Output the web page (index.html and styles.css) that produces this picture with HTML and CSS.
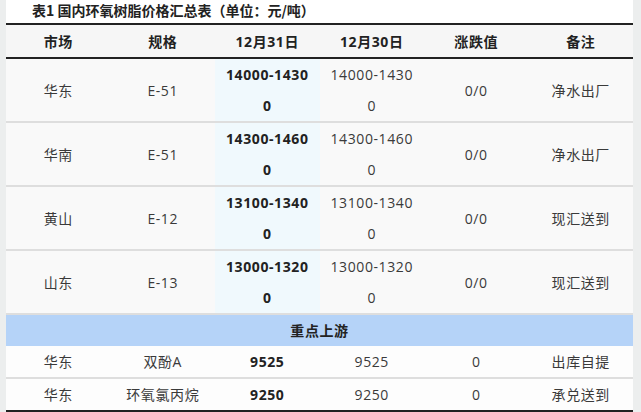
FILE: index.html
```html
<!DOCTYPE html>
<html lang="zh">
<head>
<meta charset="utf-8">
<link rel="stylesheet" href="styles.css">
</head>
<body>
<div class="sheet">
  <div class="title">表1 国内环氧树脂价格汇总表（单位：元/吨）</div>
  <table class="price">
    <colgroup>
      <col><col><col class="hl"><col><col><col>
    </colgroup>
    <thead>
      <tr><th>市场</th><th>规格</th><th>12月31日</th><th>12月30日</th><th>涨跌值</th><th>备注</th></tr>
    </thead>
    <tbody>
      <tr class="two"><td>华东</td><td>E-51</td><td class="b cur">14000-14300</td><td>14000-14300</td><td>0/0</td><td>净水出厂</td></tr>
      <tr class="two"><td>华南</td><td>E-51</td><td class="b cur">14300-14600</td><td>14300-14600</td><td>0/0</td><td>净水出厂</td></tr>
      <tr class="two"><td>黄山</td><td>E-12</td><td class="b cur">13100-13400</td><td>13100-13400</td><td>0/0</td><td>现汇送到</td></tr>
      <tr class="two"><td>山东</td><td>E-13</td><td class="b cur">13000-13200</td><td>13000-13200</td><td>0/0</td><td>现汇送到</td></tr>
      <tr class="section"><td colspan="6">重点上游</td></tr>
      <tr class="one"><td>华东</td><td>双酚A</td><td class="b">9525</td><td>9525</td><td>0</td><td>出库自提</td></tr>
      <tr class="one last"><td>华东</td><td>环氧氯丙烷</td><td class="b">9250</td><td>9250</td><td>0</td><td>承兑送到</td></tr>
    </tbody>
  </table>
</div>
</body>
</html>
```

FILE: styles.css
```css
html, body {
  margin: 0;
  padding: 0;
  background: #eceeee;
}
body {
  font-family: "Open Sans", "Noto Sans CJK SC", sans-serif;
  color: #333;
}
.sheet {
  width: 627px;
  margin: 0 0 0 6px;
  padding-top: 1px;
  background: #fff;
  height: 412px;
  overflow: hidden;
}
.title {
  font-family: "Noto Sans CJK SC", sans-serif;
  font-weight: bold;
  font-size: 14px;
  line-height: 18px;
  height: 22px;
  padding-left: 26px;
  color: #222;
}
.price {
  width: 627px;
  border-collapse: collapse;
  table-layout: fixed;
  font-size: 14px;
  letter-spacing: 0.6px;
}
.price th, .price td {
  text-align: center;
  vertical-align: middle;
  padding: 0 8px;
  word-break: break-all;
  line-height: 31px;
}
.price thead th {
  background: #f6f6f6;
  border-top: 2px solid #222;
  border-bottom: 2px solid #222;
  height: 32px;
  font-weight: bold;
  color: #222;
  font-family: "Noto Sans CJK SC", "Open Sans", sans-serif;
}
.price thead th:nth-child(3), .price thead th:nth-child(4) {
  font-family: "Open Sans", "Noto Sans CJK SC", sans-serif;
}
.price tbody td {
  border-bottom: 2px solid #dedede;
  background: #f9f9f9;
  color: #3a3a3a;
}
.price tbody td.cur {
  background: #f0f9fd;
}
.price td.b {
  font-weight: bold;
  color: #222;
}
.price tr.one td {
  background: #fdfdfd;
}
.price tr.section td {
  background: #b5d3f8;
  font-weight: bold;
  color: #222;
  border-bottom: none;
  font-family: "Noto Sans CJK SC", sans-serif;
}
.price tr.last td {
  border-bottom: 2px solid #222;
}
```
